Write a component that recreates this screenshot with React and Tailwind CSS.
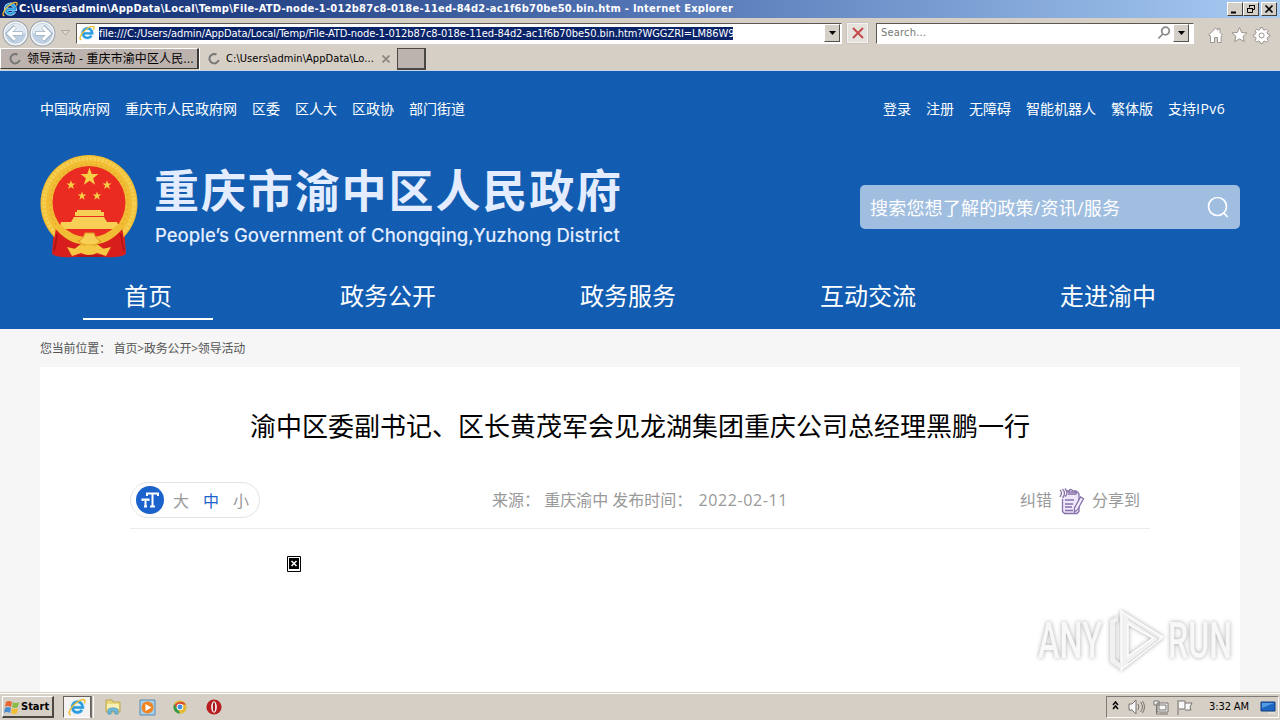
const topLinks = ["中国政府网", "重庆市人民政府网", "区委", "区人大", "区政协", "部门街道"];
const userLinks = ["登录", "注册", "无障碍", "智能机器人", "繁体版"];
const navItems = ["首页", "政务公开", "政务服务", "互动交流", "走进渝中"];

const IeIcon = ({ className }) => (
  <svg viewBox="0 0 16 16" className={className} fill="none">
    <path d="M12.600 10.700a4.900 4.900 0 1 1 .7-2.300H4.200" stroke="#c5e8fb" strokeWidth="3.400" />
    <path d="M12.400 10.600a4.700 4.700 0 1 1 .7-2.200H4.400" stroke="#2b9be0" strokeWidth="2.300" />
    <path d="M2.600 14.600C.2 15 .3 11.600 4 7.300 8 2.800 13.200.3 14.700 1.700c.7.800.3 2-.3 3.100" stroke="#f0bd2d" strokeWidth="1.300" />
  </svg>
);

const Arrow = ({ flip }) => (
  <svg viewBox="0 0 26 26" className={flip ? "size-[27px] -scale-x-100" : "size-[27px]"}>
    <circle cx="13" cy="13" r="12" fill="#f4f5f7" stroke="#9aa3ad" />
    <circle cx="13" cy="13" r="10" fill="#bfd0e2" />
    <path d="M3.500 13a9.500 9.500 0 0 1 19 0c-6-2-13-2-19 0z" fill="#e1e9f1" />
    <path d="M12.500 6.500 6 13l6.500 6.500M7 13h13" fill="none" stroke="#9fb1c4" strokeWidth="4.500" />
    <path d="M12.500 7 6.500 13l6 6M7 13h12.500" fill="none" stroke="#fff" strokeWidth="3" />
  </svg>
);

const DropButton = () => (
  <div className="flex h-[18px] w-4 items-center justify-center border border-t-white border-l-white border-r-[#55514b] border-b-[#55514b] bg-[#d4d0c8]">
    <svg viewBox="0 0 7 4" className="h-1 w-[7px]"><path d="M0 0h7L3.500 4z" /></svg>
  </div>
);

const Spinner = () => (
  <svg viewBox="0 0 12 12" className="size-3 shrink-0" fill="none">
    <path d="M8.500 1.600A4.700 4.700 0 1 0 10.700 7" stroke="#777" strokeWidth="2" />
  </svg>
);

const WinButton = ({ children }) => (
  <div className="flex h-[14px] w-4 items-center justify-center border border-t-white border-l-white border-r-[#404040] border-b-[#404040] bg-[#d4d0c8]">
    <svg viewBox="0 0 10 10" className="size-[10px]" fill="none" stroke="#000">{children}</svg>
  </div>
);

const TitleBar = () => (
  <div className="flex h-[18px] items-center bg-linear-to-r from-[#0c266c] via-[#5274b4] to-[#a8ccf2] pr-[3px] pl-[2px]">
    <IeIcon className="size-4" />
    <span className="ml-[1px] w-[716px] text-[11px] font-bold tracking-[0.255px] whitespace-nowrap text-white">
      C:\Users\admin\AppData\Local\Temp\File-ATD-node-1-012b87c8-018e-11ed-84d2-ac1f6b70be50.bin.htm - Internet Explorer
    </span>
    <div className="ml-auto flex">
      <WinButton><path d="M1 8.500h5" strokeWidth="2" /></WinButton>
      <WinButton><path d="M3.500 3.500v-2h5v4h-2M1.500 4.500h5v4h-5zM3 1.500h6M1 4.500h6" /></WinButton>
      <div className="w-[2px]" />
      <WinButton><path d="m1.500 1.500 7 7m0-7-7 7" strokeWidth="1.700" /></WinButton>
    </div>
  </div>
);

const Toolbar = () => (
  <div className="flex h-[30px] items-center bg-[#d6cfc6] pl-[2px]">
    <Arrow />
    <Arrow flip />
    <svg viewBox="0 0 9 6" className="ml-[5px] h-[6px] w-[9px]"><path d="M.5.500h8l-4 4.500z" fill="#ddd9d3" stroke="#aaa59d" /></svg>
    <div className="ml-[6px] flex h-[21px] w-[766px] items-center border border-t-[#5c5750] border-l-[#5c5750] border-white bg-white pl-[2px]">
      <IeIcon className="size-4" />
      <span className="ml-[4px] h-[13px] w-[634px] bg-[#0a246a] text-[11px] leading-[13px] tracking-[-0.065px] whitespace-nowrap text-white">
        file:///C:/Users/admin/AppData/Local/Temp/File-ATD-node-1-012b87c8-018e-11ed-84d2-ac1f6b70be50.bin.htm?WGGZRI=LM86W9
      </span>
      <div className="mr-[1px] ml-auto"><DropButton /></div>
    </div>
    <div className="ml-[5px] flex h-5 w-[21px] items-center justify-center border border-[#f5f4f2] bg-[#e5e1dc] shadow-[0_0_1px_#888]">
      <svg viewBox="0 0 12 12" className="size-3"><path d="m1 1 10 10m0-10L1 11" stroke="#c34b4b" strokeWidth="2" /></svg>
    </div>
    <div className="ml-[8px] flex h-[21px] w-[318px] items-center border border-t-[#5c5750] border-l-[#5c5750] border-white bg-white pl-1">
      <span className="mt-px text-[11px] tracking-[0.2px] text-[#777]">Search...</span>
      <svg viewBox="0 0 14 14" className="ml-auto size-[14px]" fill="none" stroke="#8a8a8a" strokeWidth="1.800">
        <circle cx="8.500" cy="5" r="3.800" /><path d="M5.700 8 1.500 12.500" />
      </svg>
      <div className="mr-[4px] ml-[2px]"><DropButton /></div>
    </div>
    <svg viewBox="0 0 64 18" className="mt-[3px] ml-[13px] h-[18px] w-[66px]" fill="#fff" stroke="#9a958e">
      <path d="M.7 9 7.500 2l2.500 2.300V2.500h2v4L14.500 9l-1.300 1v6.500H9.500v-5h-3v5H2.500V10z" />
      <path d="m31.500 1.500 2.200 5 5.300.4-4 3.500 1.300 5.300-4.800-2.900-4.800 2.900 1.300-5.300-4-3.500 5.300-.4z" />
      <path d="m54.500 1.500.6 2 1.500.6 2-1 1.500 1.500-1 2 .7 1.500 2 .6v1.800l-2 .7-.7 1.400 1 2-1.500 1.500-2-1-1.500.7-.6 1.700h-1.800l-.7-1.700-1.500-.7-1.900 1-1.500-1.500 1-2-.7-1.400-2-.7V8.700l2-.6.7-1.500-1-2 1.500-1.500 1.900 1 1.500-.6.7-2z" />
      <circle cx="53.600" cy="9.500" r="2.500" />
    </svg>
  </div>
);

const TabStrip = () => (
  <div className="flex h-[22px] items-start bg-[#d6cfc6] text-[12px] text-black">
    <div className="flex h-[21px] w-[199px] items-center gap-[6px] border border-r-2 border-white border-r-[#3c3935] border-b-[#3c3935] bg-[#bcb3ae] pl-2">
      <Spinner />
      <span className="mt-px tracking-[0.100px] whitespace-nowrap">领导活动 - 重庆市渝中区人民...</span>
    </div>
    <div className="flex h-[22px] w-[198px] items-center gap-[6px] border-l border-white bg-[#d6cfc6] pl-2">
      <Spinner />
      <span className="mt-px w-[150px] text-[11px] tracking-[0.070px] whitespace-nowrap">C:\Users\admin\AppData\Lo...</span>
      <svg viewBox="0 0 8 8" className="size-2"><path d="m.5.500 7 7m0-7-7 7" stroke="#8b8782" strokeWidth="1.800" /></svg>
    </div>
    <div className="h-[22px] w-[29px] border border-r-2 border-b-2 border-[#4a4641] bg-[#bcb3ae]" />
  </div>
);

const Star = ({ x, y, s }) => (
  <path transform={`translate(${x} ${y}) scale(${s})`} d="M0-10 2.400-3.200 9.500-3.100 3.800 1.200 5.900 8.100 0 4-5.900 8.100-3.800 1.200-9.500-3.100-2.400-3.200z" fill="#f7cf45" />
);

const Emblem = () => (
  <svg viewBox="0 0 98 104" className="h-[104px] w-[98px]">
    <path d="M14 72 12 99q6 4 20 3h34q14 1 20-3l-2-27z" fill="#d81e1c" />
    <circle cx="49" cy="48.500" r="48.500" fill="#f0bd35" />
    <circle cx="49" cy="48.500" r="45" fill="none" stroke="#f6cf50" strokeWidth="4" strokeDasharray="3 1" />
    <circle cx="49" cy="48.500" r="39" fill="none" stroke="#e5ad2a" strokeWidth="1.500" strokeDasharray="2 3" />
    <circle cx="49" cy="47.500" r="36.500" fill="#e92b21" />
    <Star x={49.500} y={22} s={0.950} />
    <Star x={31} y={30} s={0.480} />
    <Star x={67} y={30} s={0.480} />
    <Star x={42} y={41} s={0.450} />
    <Star x={57} y={41} s={0.450} />
    <path d="M37 55h24v2h3v4H35v-4h2zM34 62h30l3 5H31zM21 67h56l2 5v2H20v-2z" fill="#f8cf55" />
    <path d="M22 75h54q-9 11-20 12l-7-6-7 6q-12-2-20-12z" fill="#e92b21" />
    <path d="M16 73q-3 15-3 26 8-2 16-1l12-9q-15-3-25-16zM82 73q3 15 3 26-8-2-16-1l-12-9q15-3 25-16z" fill="#d81e1c" />
    <path d="M13 71q14 17 28 18l4-7q-13-1-24-12zM85 71q-14 17-28 18l-4-7q13-1 24-12z" fill="#f0bd35" />
    <path d="M38 86q5-1 7-8h9q2 7 7 8l-6 4H44z" fill="#f8cf55" stroke="#df9a1d" />
    <path d="m27 92 13 3q3-5 9-5t9 5l13-3-5 9-9-3q-8 4-16 0l-9 3z" fill="#f5c744" />
    <path d="M17 79q-1 10-3 17M81 79q1 10 3 17M37 101h26" stroke="#a91318" strokeWidth="1.500" fill="none" />
  </svg>
);

const SiteHeader = () => (
  <header className="h-[258px] bg-[#125db1] text-white">
    <div className="flex h-[76px] items-center justify-between pr-[55px] pb-[2px] pl-10 text-[14px]">
      <div className="flex gap-[15px]">
        {topLinks.map((link) => <a key={link} className="whitespace-nowrap">{link}</a>)}
      </div>
      <div className="flex gap-[15px]">
        {userLinks.map((link) => <a key={link} className="whitespace-nowrap">{link}</a>)}
        <a className="w-[57px] whitespace-nowrap">支持<span className="tracking-[0.500px]">IPv6</span></a>
      </div>
    </div>
    <div className="flex h-[120px] items-start pl-10">
      <div className="mt-2"><Emblem /></div>
      <div className="mt-[12px] ml-[16px] w-[480px] text-[#e4edff]">
        <h1 className="text-[45px] leading-[64px] font-bold tracking-[1.900px] whitespace-nowrap">重庆市渝中区人民政府</h1>
        <p className="ml-px font-['Inter'] text-[18.500px] leading-6 font-medium whitespace-nowrap">People’s Government of Chongqing,Yuzhong District</p>
      </div>
      <div className="mt-[38px] ml-auto mr-10 flex h-[44px] w-[380px] items-center justify-between rounded-[5px] bg-[#a0bee0] pr-[11px] pl-[10px]">
        <span className="mt-[3px] text-[18px] tracking-[0.200px]">搜索您想了解的政策/资讯/服务</span>
        <svg viewBox="0 0 22 22" className="size-[22px]" fill="none" stroke="#fff" strokeWidth="1.700">
          <circle cx="10.500" cy="10.500" r="9" /><path d="m17 17 3.500 4" />
        </svg>
      </div>
    </div>
    <nav className="flex pl-7 text-[24px]">
      {navItems.map((item, index) => (
        <div key={item} className="flex w-60 justify-center">
          <a className={index === 0 ? "h-[53px] w-[130px] border-b-2 border-white text-center leading-[57px]" : "leading-[57px]"}>{item}</a>
        </div>
      ))}
    </nav>
  </header>
);

const ArticleMeta = () => (
  <div className="flex h-[47px] items-start justify-between border-b border-[#ebebeb] text-[16px] text-[#999]">
    <div className="flex h-9 w-[130px] items-center rounded-full border border-[#e3e3e3] pl-[5px]">
      <svg viewBox="0 0 28 28" className="size-7">
        <circle cx="14" cy="14" r="14" fill="#1b62cc" />
        <path d="M11 10V7.500h11V10M16.500 7.500v13M14 20.500h5M6.500 15v-1.500h6V15M9.500 13.500v7M8 20.500h3" fill="none" stroke="#fff" strokeWidth="2" />
      </svg>
      <span className="mt-[2px] ml-[9px]">大</span>
      <span className="mt-[2px] ml-[14px] text-[#1b62cc]">中</span>
      <span className="mt-[2px] ml-[14px]">小</span>
    </div>
    <p className="w-[296px] leading-9 whitespace-nowrap">来源： 重庆渝中 发布时间： <span className="ml-[2px] tracking-[0.600px]">2022-02-11</span></p>
    <div className="mr-[10px] flex h-9 items-center">
      <span>纠错</span>
      <svg viewBox="0 0 26 28" className="mx-[7px] mt-[2px] h-7 w-[26px]" fill="#eee6fa" stroke="#8672a8" strokeWidth="1.300">
        <path d="M3.500 12v12.500l2 2H18l2-2V7l-1.500-2H9" />
        <path d="M8 6V4h2q1-3 4 0h3v3H9M6 13h9M6 17h8M6 20h7M6 23.500h8M1 3q3 2 0 7M3.500 2q4 4 0 9M6 1.500q4 5 0 8" fill="none" />
        <path d="m15.500 21 6-11 3 1.700-6 11-3 2.500z" fill="#f5f0ff" />
      </svg>
      <span>分享到</span>
    </div>
  </div>
);

const Watermark = () => (
  <div className="absolute top-[608px] left-[1036px]">
    <svg viewBox="0 0 204 66" className="h-[66px] w-[204px] drop-shadow-[0_0_2px_#aaa]">
      <path d="M85 3v59l42-33zM92 16v32l25-18z" fill="#f1f1f1" fillRule="evenodd" stroke="#fff" strokeWidth="1.500" />
      <path d="m82 8-8 4v42l10 7v-6l-5-4V15l3-2z" fill="#f1f1f1" />
      <path d="m92 11 31 20-31 24" fill="none" stroke="#d4d4d4" strokeWidth="1" />
      <g fill="#f8f8f8" fontFamily="Roboto" fontSize="50" fontWeight="500">
        <text x="2" y="50" textLength="64" lengthAdjust="spacingAndGlyphs">ANY</text>
        <text x="132" y="50" textLength="64" lengthAdjust="spacingAndGlyphs">RUN</text>
      </g>
    </svg>
  </div>
);

const Taskbar = () => (
  <footer className="flex h-[28px] items-center border-t border-[#d6cfc6] bg-[#d6cfc6] pt-px text-[11px] text-black shadow-[inset_0_1px_#fff]">
    <div className="ml-[2px] flex h-[22px] w-[52px] items-center gap-px border border-r-2 border-b-2 border-white border-r-[#4b4741] border-b-[#4b4741] pl-px">
      <svg viewBox="0 0 16 16" className="size-4 shrink-0">
        <path d="M2 3q3-2 6 0L7 8q-3-2-6 0z" fill="#e86531" /><path d="M9 3q3 2 6 0l-1 5q-3 2-6 0z" fill="#8bbc48" />
        <path d="M1 9q3-2 6 0l-1 5q-3-2-6 0z" fill="#498dd0" /><path d="M8 9q3 2 6 0l-1 5q-3 2-6 0z" fill="#f2bd31" />
      </svg>
      <b className="mt-px">Start</b>
    </div>
    <div className="ml-[9px] flex h-[22px] w-[28px] items-center justify-center border border-[#66615a] border-b-white bg-[#f5f3f1]"><IeIcon className="size-[18px]" /></div>
    <div className="h-[22px] w-[3px] border-r border-l border-r-white border-l-[#77736e]" />
    <svg viewBox="0 0 18 18" className="ml-[10px] size-[18px]">
      <path d="M2 2h6l1 2h7v10H2z" fill="#ead77b" stroke="#bca653" /><path d="M3 6h12v5H3z" fill="#f8efb4" /><path d="M4 16v-4q0-2 5-2t5 2v4h-3v-3H7v3z" fill="#72bddd" stroke="#569bbb" />
    </svg>
    <svg viewBox="0 0 17 17" className="ml-[17px] size-[17px]">
      <path d="M1 1h15v15H1z" fill="#a7d0e9" stroke="#588bb1" /><circle cx="8.500" cy="8.500" r="6" fill="#f18422" /><path d="m6.500 5 6 3.500-6 3.500z" fill="#fff" />
    </svg>
    <svg viewBox="0 0 16 16" className="ml-[17px] size-[14px]">
      <circle cx="8" cy="8" r="7.500" fill="#e4b92e" /><path d="M8 8H1A8 8 0 0 1 15 5H8z" fill="#df4333" /><path d="M1.400 4.500 7 13l1 2.500A7.500 7.500 0 0 1 1.400 4.500" fill="#349a50" /><circle cx="8" cy="8" r="3.800" fill="#fff" /><circle cx="8" cy="8" r="2.800" fill="#438cda" />
    </svg>
    <svg viewBox="0 0 16 16" className="ml-[19px] size-4">
      <circle cx="8" cy="8" r="7.600" fill="#b71e21" /><ellipse cx="8" cy="8" rx="2.800" ry="5.700" fill="#fff" /><ellipse cx="8" cy="8" rx="1.200" ry="4.800" fill="#a9171b" />
    </svg>
    <div className="mr-px ml-auto flex h-[22px] w-[173px] items-center border border-t-[#807b74] border-l-[#807b74] border-white pl-[5px]">
      <svg viewBox="0 0 7 9" className="mb-[3px] h-[9px] w-[7px]" fill="none" stroke="#000" strokeWidth="1.500"><path d="m1 4 2.500-3L6 4M1 8l2.500-3L6 8" /></svg>
      <svg viewBox="0 0 66 18" className="ml-[9px] h-[18px] w-[66px]" fill="#f8f8f8" stroke="#77736e">
        <path d="M1 6h3l4-4v14l-4-4H1z" /><path d="M10 6q2 3 0 6M12.500 4q4 5 0 10M14.500 3q4 6 0 12" fill="none" />
        <path d="M29 5h11v9H29zM31 7h7v5h-7zM32 16h8M26 3h5v4h-5zM28.500 7v9H32" />
        <path d="M50 2v15M51 3h6v8h-6M57 5h7l-2 4 1 3h-6" />
      </svg>
      <span className="mt-px ml-[15px] w-[43px] tracking-[-0.100px] whitespace-nowrap">3:32 AM</span>
      <svg viewBox="0 0 16 14" className="ml-[8px] h-[14px] w-4"><path d="M1 2h14v9H1z" fill="#1d66c2" stroke="#153e83" /><path d="M2 3h12L2 8z" fill="#559ce5" /><path d="M8 13h7" stroke="#eee" /></svg>
    </div>
  </footer>
);

const App = () => {
  return (
    <div className="relative flex h-[720px] w-[1280px] flex-col overflow-hidden bg-[#f6f6f6] font-['DejaVu_Sans_Condensed','Noto_Sans_CJK_SC',sans-serif]">
      <TitleBar />
      <Toolbar />
      <TabStrip />
      <div className="h-px bg-[#c2d5e7]" />
      <div className="h-[621px] font-['Open_Sans','Noto_Sans_CJK_SC',sans-serif]">
        <SiteHeader />
        <div className="h-[38px] pl-10 text-[12px] leading-[40px] tracking-[-0.200px] text-[#555]">您当前位置： 首页&gt;政务公开&gt;领导活动</div>
        <main className="mx-10 h-[325px] bg-white px-[90px] pt-[38px]">
          <h2 className="-mx-4 text-center text-[26px] leading-[42px] whitespace-nowrap text-black">渝中区委副书记、区长黄茂军会见龙湖集团重庆公司总经理黑鹏一行</h2>
          <div className="mt-[35px]"><ArticleMeta /></div>
          <svg viewBox="0 0 14 16" className="mt-[27px] ml-[157px] h-4 w-[14px]">
            <path d="M.5.500h13v15H.5z" fill="#fff" stroke="#000" /><path d="M2 2h10v11H2z" /><path d="m4.500 5 5 5m0-5-5 5" stroke="#fff" strokeWidth="1.500" />
          </svg>
        </main>
      </div>
      <Watermark />
      <Taskbar />
    </div>
  );
};

export default App;
